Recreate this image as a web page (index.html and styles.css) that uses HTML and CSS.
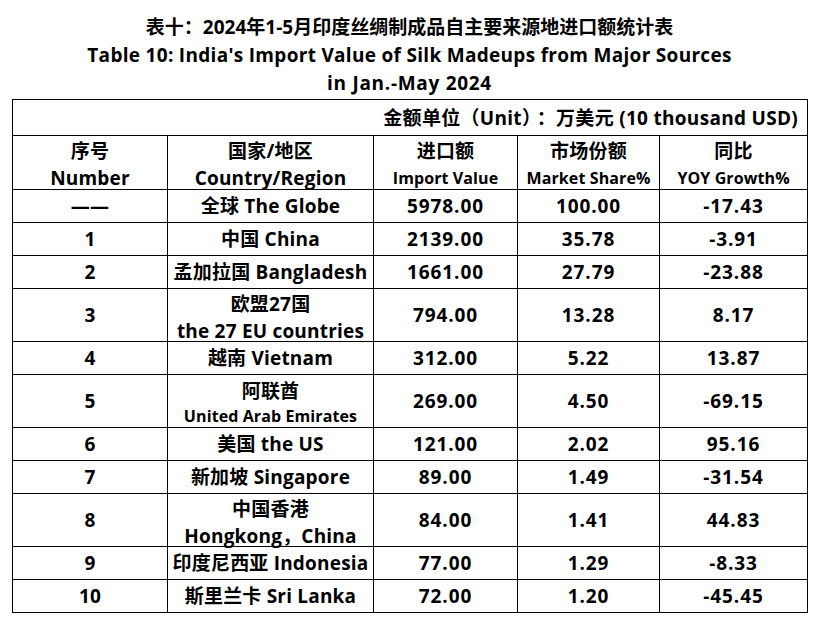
FILE: index.html
```html
<!DOCTYPE html>
<html lang="zh">
<head>
<meta charset="utf-8">
<title>表十</title>
<link rel="stylesheet" href="styles.css">
</head>
<body>
<div class="page">
  <h1 class="title">
    <span class="title-line">表十：2024年1-5月印度丝绸制成品自主要来源地进口额统计表</span>
    <span class="title-line latin">Table 10: India's Import Value of Silk Madeups from Major Sources</span>
    <span class="title-line latin wide">in Jan.-May 2024</span>
  </h1>
  <table class="data">
    <colgroup>
      <col class="c-num"><col class="c-country"><col class="c-val"><col class="c-share"><col class="c-yoy">
    </colgroup>
    <tr class="unit-row"><td colspan="5" class="unit">金额单位（Unit）<span class="colon">：</span>万美元 (10 thousand USD)</td></tr>
    <tr class="head-row">
      <td class="stack"><span class="l1">序号</span><span class="l2 big">Number</span></td>
      <td class="stack"><span class="l1">国家/地区</span><span class="l2 big">Country/Region</span></td>
      <td class="stack"><span class="l1">进口额</span><span class="l2">Import Value</span></td>
      <td class="stack"><span class="l1">市场份额</span><span class="l2">Market Share%</span></td>
      <td class="stack"><span class="l1">同比</span><span class="l2">YOY Growth%</span></td>
    </tr>
    <tr class="r1"><td>——</td><td>全球 The Globe</td><td class="num">5978.00</td><td class="num">100.00</td><td class="num">-17.43</td></tr>
    <tr class="r1"><td>1</td><td>中国 China</td><td class="num">2139.00</td><td class="num">35.78</td><td class="num">-3.91</td></tr>
    <tr class="r1"><td>2</td><td>孟加拉国 Bangladesh</td><td class="num">1661.00</td><td class="num">27.79</td><td class="num">-23.88</td></tr>
    <tr class="r2"><td>3</td><td class="stack"><span class="l1">欧盟27国</span><span class="l2 big">the 27 EU countries</span></td><td class="num">794.00</td><td class="num">13.28</td><td class="num">8.17</td></tr>
    <tr class="r1"><td>4</td><td>越南 Vietnam</td><td class="num">312.00</td><td class="num">5.22</td><td class="num">13.87</td></tr>
    <tr class="r2"><td>5</td><td class="stack tight"><span class="l1">阿联酋</span><span class="l2">United Arab Emirates</span></td><td class="num">269.00</td><td class="num">4.50</td><td class="num">-69.15</td></tr>
    <tr class="r1"><td>6</td><td>美国 the US</td><td class="num">121.00</td><td class="num">2.02</td><td class="num">95.16</td></tr>
    <tr class="r1"><td>7</td><td>新加坡 Singapore</td><td class="num">89.00</td><td class="num">1.49</td><td class="num">-31.54</td></tr>
    <tr class="r2"><td>8</td><td class="stack"><span class="l1">中国香港</span><span class="l2 big">Hongkong，China</span></td><td class="num">84.00</td><td class="num">1.41</td><td class="num">44.83</td></tr>
    <tr class="r1"><td>9</td><td>印度尼西亚 Indonesia</td><td class="num">77.00</td><td class="num">1.29</td><td class="num">-8.33</td></tr>
    <tr class="r1"><td>10</td><td>斯里兰卡 Sri Lanka</td><td class="num">72.00</td><td class="num">1.20</td><td class="num">-45.45</td></tr>
  </table>
</div>
</body>
</html>
```
FILE: styles.css
```css
html, body {
  margin: 0;
  padding: 0;
  background: #fff;
}
body {
  font-family: "Open Sans", "Noto Sans CJK SC", sans-serif;
  font-weight: 700;
  color: #000;
}
.page {
  width: 795px;
  margin-left: 12px;
  padding-top: 13px;
}
.title {
  margin: 0 0 2px;
  font-size: 19px;
  font-weight: 700;
  text-align: center;
  line-height: 28px;
}
.title-line {
  display: block;
}
.title-line.latin {
  letter-spacing: 0.3px;
}
.title-line.wide {
  letter-spacing: 0.7px;
}
.data {
  width: 795px;
  border-collapse: collapse;
  table-layout: fixed;
  font-size: 19px;
  letter-spacing: 0.2px;
}
.c-num { width: 155px; }
.c-country { width: 206px; }
.c-val { width: 144px; }
.c-share { width: 142px; }
.c-yoy { width: 148px; }
.data td {
  border: 1px solid #000;
  text-align: center;
  vertical-align: middle;
  padding: 0;
  line-height: 24px;
  white-space: nowrap;
}
.data td.num {
  letter-spacing: 0.9px;
}
.data td.unit {
  text-align: right;
  padding-right: 9px;
  font-size: 19px;
  letter-spacing: 0.3px;
}
.colon {
  margin-left: 5px;
}
.unit-row { height: 36px; }
.head-row { height: 54px; }
.r1 { height: 33px; }
.r2 { height: 53px; }
.data td.stack {
  padding-top: 4px;
}
.l1, .l2 {
  display: block;
  line-height: 20px;
}
.l2 {
  font-size: 16px;
  letter-spacing: 0.1px;
  margin-top: 7px;
}
.l2.big {
  font-size: 19px;
  letter-spacing: 0.2px;
}
.tight .l2 {
  margin-top: 5px;
}
```
